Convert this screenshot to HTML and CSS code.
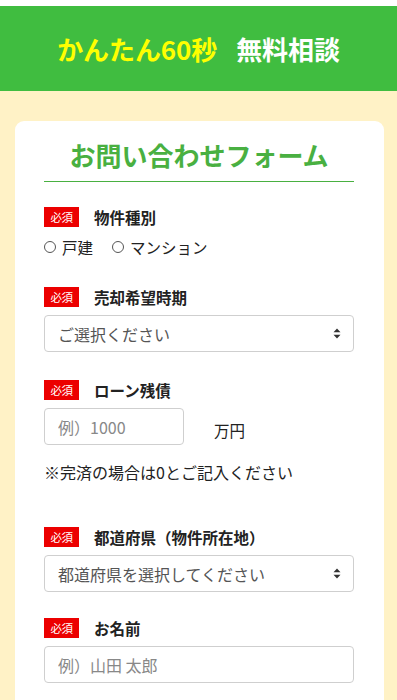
FILE: index.html
```html
<!DOCTYPE html>
<html lang="ja">
<head>
<meta charset="utf-8">
<title>かんたん60秒 無料相談</title>
<link rel="stylesheet" href="styles.css">
</head>
<body>
<div class="topgap"></div>
<header class="hero">
  <h1 class="hero-title"><span class="hl">かんたん60秒</span><span class="wt">無料相談</span></h1>
</header>
<main class="page">
  <form class="card">
    <h2 class="card-title">お問い合わせフォーム</h2>

    <div class="field field-radio">
      <div class="label-row"><span class="badge">必須</span><span class="label">物件種別</span></div>
      <div class="radios">
        <label class="radio"><input type="radio" name="type"><span>戸建</span></label>
        <label class="radio"><input type="radio" name="type"><span>マンション</span></label>
      </div>
    </div>

    <div class="field field-sel">
      <div class="label-row"><span class="badge">必須</span><span class="label">売却希望時期</span></div>
      <div class="select-wrap">
        <select class="select"><option>ご選択ください</option></select>
        <svg class="arrow" width="8" height="11" viewBox="0 0 8 11"><path d="M4 0.5 L7.5 4.3 H0.5 Z M4 10.5 L7.5 6.7 H0.5 Z" fill="#333"/></svg>
      </div>
    </div>

    <div class="field field-loan">
      <div class="label-row"><span class="badge">必須</span><span class="label">ローン残債</span></div>
      <div class="loan-row">
        <input class="input input-sm" type="text" placeholder="例）1000">
        <span class="unit">万円</span>
      </div>
      <p class="note">※完済の場合は0とご記入ください</p>
    </div>

    <div class="field field-sel2">
      <div class="label-row"><span class="badge">必須</span><span class="label">都道府県（物件所在地）</span></div>
      <div class="select-wrap">
        <select class="select"><option>都道府県を選択してください</option></select>
        <svg class="arrow" width="8" height="11" viewBox="0 0 8 11"><path d="M4 0.5 L7.5 4.3 H0.5 Z M4 10.5 L7.5 6.7 H0.5 Z" fill="#333"/></svg>
      </div>
    </div>

    <div class="field">
      <div class="label-row"><span class="badge">必須</span><span class="label">お名前</span></div>
      <input class="input" type="text" placeholder="例）山田 太郎">
    </div>
  </form>
</main>
</body>
</html>
```

FILE: styles.css
```css
* { box-sizing: border-box; }
html, body {
  margin: 0;
  padding: 0;
}
body {
  background: #fff2c6;
  font-family: "Noto Sans CJK JP", "Noto Sans", sans-serif;
  color: #222;
}
.topgap {
  height: 6px;
  background: #fff;
}
.hero {
  background: #40bd40;
  height: 85px;
  display: flex;
  align-items: center;
  justify-content: center;
}
.hero-title {
  margin: 0;
  font-size: 26px;
  font-weight: 700;
  line-height: 1;
  letter-spacing: -0.1px;
}
.hl { color: #ffff00; }
.wt { color: #fff; margin-left: 19px; }

.page {
  padding: 30px 13px 40px 15px;
}
.card {
  background: #fff;
  border-radius: 9px;
  padding: 16px 30px 30px 29px;
}
.card-title {
  margin: 0 0 25px;
  text-align: center;
  color: #49b041;
  font-size: 26px;
  font-weight: 700;
  line-height: 36px;
  padding-bottom: 8px;
  border-bottom: 1px solid #49b041;
}
.field {
  margin-bottom: 27px;
}
.field-radio { margin-bottom: 28px; }
.field-sel { margin-bottom: 28px; }
.field-loan { margin-bottom: 43px; }
.field-sel2 { margin-bottom: 26px; }

.label-row {
  display: flex;
  align-items: center;
  height: 20px;
  margin-bottom: 8px;
}
.badge {
  background: #ec0000;
  color: #fff;
  font-size: 11.5px;
  width: 35px;
  height: 20px;
  line-height: 20px;
  text-align: center;
  letter-spacing: -0.5px;
  flex: none;
}
.label {
  margin-left: 15px;
  font-size: 15.5px;
  font-weight: 700;
  color: #222;
}
.radios {
  display: flex;
  gap: 19px;
  margin-top: 1px;
  line-height: 24px;
}
.radio {
  display: flex;
  align-items: center;
  font-size: 15.5px;
  color: #222;
}
.radio input {
  appearance: none;
  -webkit-appearance: none;
  width: 12px;
  height: 12px;
  border: 1px solid #555;
  border-radius: 50%;
  margin: 0 6px 0 0;
  background: #fff;
}
.select-wrap {
  position: relative;
}
.select {
  appearance: none;
  -webkit-appearance: none;
  width: 100%;
  height: 37px;
  border: 1px solid #cfcfcf;
  border-radius: 4px;
  background: #fff;
  color: #555;
  font-family: inherit;
  font-size: 16px;
  padding: 0 30px 0 13px;
  margin: 0;
}
.arrow {
  position: absolute;
  right: 13px;
  top: 13px;
  pointer-events: none;
}
.input {
  display: block;
  width: 100%;
  height: 37px;
  border: 1px solid #cfcfcf;
  border-radius: 4px;
  font-family: inherit;
  font-size: 16px;
  padding: 0 13px;
  color: #333;
  margin: 0;
}
.input::placeholder { color: #888; }
.loan-row {
  display: flex;
  align-items: center;
}
.input-sm {
  width: 140px;
}
.unit {
  margin-left: 30px;
  padding-top: 7px;
  font-size: 15.5px;
  color: #222;
}
.note {
  margin: 15px 0 0;
  font-size: 16px;
  line-height: 24px;
  color: #222;
}
```
